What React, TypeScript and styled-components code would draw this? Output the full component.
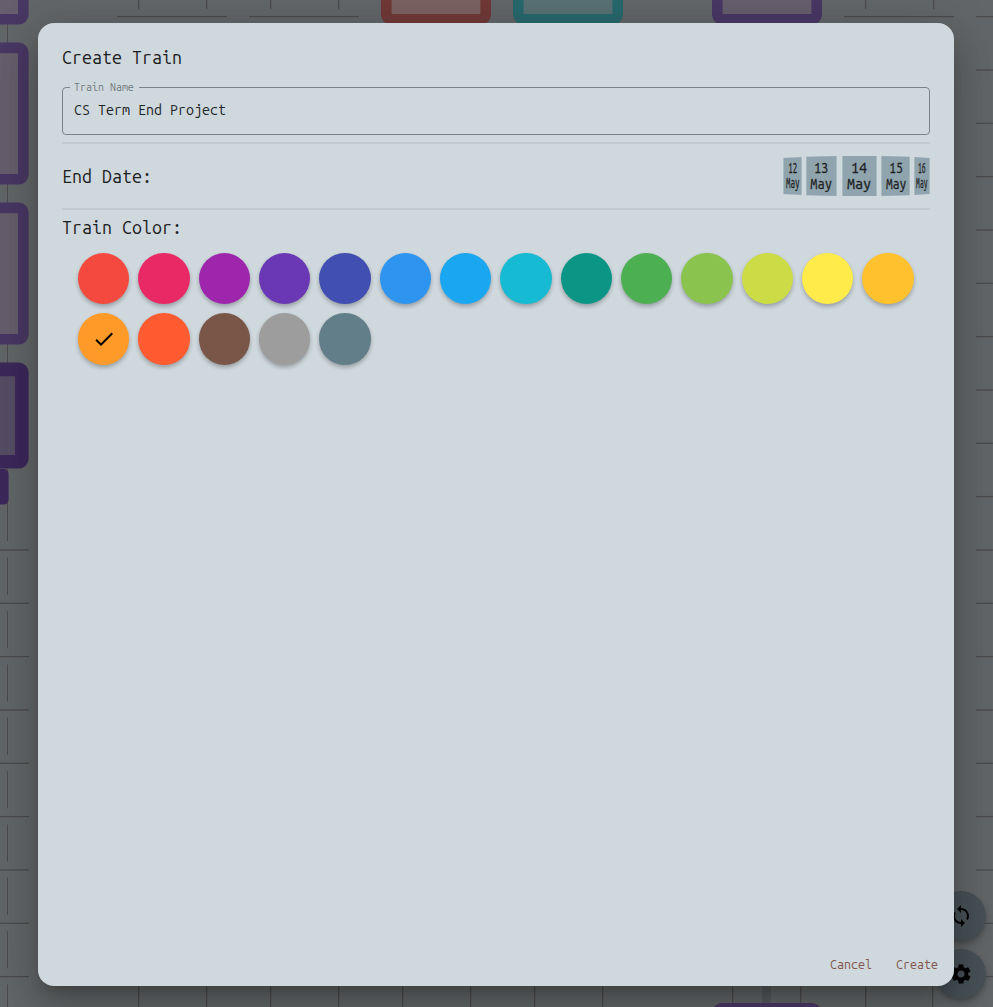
import React from "react";
import styled, { createGlobalStyle, css } from "styled-components";
import { MdCheck, MdSettings, MdSync } from "react-icons/md";

const GlobalStyle = createGlobalStyle`
  * { box-sizing: border-box; }
  html, body { margin: 0; padding: 0; }
  body { background: #626668; font-family: "Ubuntu Mono", "DejaVu Sans Mono", monospace; }
`;

const Page = styled.main`
  position: relative;
  width: 993px;
  height: 1007px;
  overflow: hidden;
  background: #626668;
  padding: 23px 39px 21px 38px;
  display: flex;
`;

const Backdrop = styled.div`
  position: absolute;
  inset: 0;
  display: flex;
  justify-content: flex-end;
  align-items: flex-end;
  padding: 0 7px 8px 0;
`;

const Board = styled.svg`
  position: absolute;
  inset: 0;
`;

const FabColumn = styled.div`
  position: relative;
  display: flex;
  flex-direction: column;
  gap: 8px;
`;

const Fab = styled.button`
  width: 50px;
  height: 50px;
  border: 0;
  border-radius: 50%;
  padding: 0;
  display: grid;
  place-items: center;
  background: #475156;
  color: #050505;
  font-size: 24px;
  box-shadow: 0 3px 5px -1px rgba(0, 0, 0, 0.2), 0 5px 8px rgba(0, 0, 0, 0.12);
`;

const Dialog = styled.section`
  position: relative;
  width: 916px;
  height: 963px;
  display: flex;
  flex-direction: column;
  background: #cfd8dd;
  border-radius: 16px;
  box-shadow: 0 11px 15px -7px rgba(0, 0, 0, 0.2), 0 24px 38px 3px rgba(0, 0, 0, 0.14),
    0 9px 46px 8px rgba(0, 0, 0, 0.12);
`;

const Content = styled.div`
  flex: 1;
  padding: 18px 24px 0;
  color: #1b2022;
`;

const heading = css`
  margin: 0;
  font-size: 17.85px;
  font-weight: 400;
  height: 32px;
  line-height: 32px;
`;
const Title = styled.h2`
  ${heading}
`;
const Label = styled.h3`
  ${heading}
`;

const PaletteLabel = styled(Label)`
  line-height: 34px;
`;

const Field = styled.fieldset`
  margin: 5px 0 7px;
  height: 57px;
  min-width: 0;
  padding: 0 11px;
  border: 1px solid #7b8485;
  border-radius: 4px;
  color: #202527;
`;

const Legend = styled.legend`
  margin-left: -4px;
  padding: 0 4px;
  height: 18px;
  width: 69px;
  font-size: 10.7px;
  line-height: 18px;
  color: #727b7e;
`;

const FieldValue = styled.div`
  height: 28px;
  font-size: 14.3px;
  line-height: 29px;
`;

const Rule = styled.hr`
  margin: 0;
  border: 0;
  height: 2px;
  background: #c2cbd1;
`;

const DateRow = styled.div`
  height: 64px;
  display: flex;
  align-items: center;
  justify-content: space-between;
`;

const Wheel = styled.div`
  display: flex;
  width: 147px;
  height: 40px;
  justify-content: space-between;
`;

const Day = styled.div<{ $w: number; $clip: string; $pad?: string }>`
  width: ${(p) => p.$w}px;
  height: 40px;
  padding: ${(p) => p.$pad ?? "0"};
  background: #90a4ad;
  clip-path: polygon(${(p) => p.$clip});
  border: 1px solid #a9bac1;
  border-width: 0 1px;
  display: flex;
  flex-direction: column;
  align-items: center;
  justify-content: center;
`;

const DayText = styled.span<{ $size: number; $scale: number; $line: number }>`
  font-size: ${(p) => p.$size}px;
  line-height: ${(p) => p.$line}px;
  transform: scaleX(${(p) => p.$scale});
  color: #1b2123;
  -webkit-text-stroke: 0.3px #1b2123;
  white-space: nowrap;
`;

const Palette = styled.div`
  display: grid;
  grid-template-columns: repeat(14, 51.3px);
  gap: 9px 9.05px;
  padding: 11px 16px 0;
`;

const Swatch = styled.button<{ $color: string }>`
  height: 51.3px;
  padding: 0;
  border: 0;
  border-radius: 50%;
  background: ${(p) => p.$color};
  color: #000;
  font-size: 24px;
  display: grid;
  place-items: center;
  box-shadow: 0 3px 5px -1px rgba(0, 0, 0, 0.2), 0 2px 4px rgba(0, 0, 0, 0.12);
`;

const Actions = styled.footer`
  display: flex;
  justify-content: flex-end;
  gap: 24px;
  height: 42px;
  padding-right: 16px;
`;

const Action = styled.button`
  height: 40px;
  padding: 0;
  border: 0;
  background: none;
  color: #80574e;
  font-family: inherit;
  font-size: 12.5px;
`;

const tieY = (i: number) => 16 + i * 53.33;

const leftTies = [10, 11, 12, 13, 14, 15, 16, 17, 18];
const rightTies = Array.from({ length: 19 }, (_, i) => i);
const bottomRails = [138, 206, 270, 338, 402, 470, 534, 602, 732, 800, 865, 932];

const wagons = [
  { x: -80, y: -100, w: 108.6, h: 124.6, edge: "#493764", fill: "#665e6c" },
  { x: -80, y: 42.6, w: 108.6, h: 142, edge: "#493764", fill: "#665e6c" },
  { x: -80, y: 202.6, w: 108.6, h: 142, edge: "#493764", fill: "#665e6c" },
  { x: -80, y: 362.6, w: 108.6, h: 106, edge: "#3d285b", fill: "#564d65", border: 13.6 },
  { x: 381, y: -100, w: 110, h: 124.6, edge: "#713938", fill: "#7b6162" },
  { x: 513, y: -100, w: 110, h: 124.6, edge: "#27686c", fill: "#587174" },
  { x: 712, y: -100, w: 110, h: 124.6, edge: "#493764", fill: "#665e6c" },
  { x: 712, y: 1003, w: 110, h: 100, edge: "#4c3968", fill: "#665e6c" },
];

const days = [
  { day: "12", w: 19, clip: "0 5%, 100% 2.5%, 100% 97.5%, 0 95%", size: 14, scale: 0.57, line: 15 },
  { day: "13", w: 31, clip: "0 2%, 100% 0, 100% 100%, 0 98%", size: 14.4, scale: 0.89, line: 16, pad: "0 2px 0 0" },
  { day: "14", w: 35, clip: "0 0, 100% 0, 100% 100%, 0 100%", size: 14.4, scale: 1, line: 16 },
  { day: "15", w: 29, clip: "0 0, 100% 2%, 100% 98%, 0 100%", size: 14.4, scale: 0.84, line: 16, pad: "0 0 0 2px" },
  { day: "16", w: 16, clip: "0 2.5%, 100% 5%, 100% 95%, 0 97.5%", size: 14, scale: 0.48, line: 15 },
];

const colors = [
  "#f4493f", "#e92866", "#9d26ad", "#6a38b4", "#424fb2", "#2d94ef", "#1aa7f2",
  "#16bbd3", "#0b9585", "#4caf52", "#8bc34f", "#ccdc46", "#ffeb4a", "#ffc22e",
  "#ff9a29", "#ff5b31", "#7a5649", "#9d9d9d", "#617e89",
];

function TrackBoard() {
  return (
    <Board width="993" height="1007" aria-hidden="true">
      <g fill="#4d4a4b">
        {leftTies.map((i) => (
          <React.Fragment key={i}>
            <rect x={0} y={tieY(i)} width={29} height={1.3} />
            <rect x={7} y={tieY(i) + 8.6} width={1} height={37} />
          </React.Fragment>
        ))}
        {rightTies.map((i) => <rect key={i} x={976} y={tieY(i)} width={17} height={1.3} />)}
        <rect x={7} y={20} width={1} height={521} />
        {[138, 206, 270, 338, 865, 933].map((x) => <rect key={x} x={x} y={0} width={1.3} height={9} />)}
        {[117, 249, 844].map((x) => <rect key={x} x={x} y={16} width={110} height={1.2} />)}
        {bottomRails.map((x) => <rect key={x} x={x} y={980} width={1.3} height={27} />)}
      </g>
      <rect x={762} y={980} width={9} height={24} fill="#56595d" />
      {wagons.map(({ x, y, w, h, edge, fill, border = 10.6 }) => (
        <g key={`${x}:${y}`}>
          <rect x={x} y={y} width={w} height={h} rx={10} fill={edge} />
          <rect x={x + border} y={y + border} width={w - 2 * border} height={h - 2 * border} fill={fill} />
        </g>
      ))}
      <rect x={-40} y={469} width={48.6} height={35.6} rx={5} fill="#3d285b" />
    </Board>
  );
}

export default function App() {
  return (
    <Page>
      <GlobalStyle />
      <Backdrop>
        <TrackBoard />
        <FabColumn>
          <Fab aria-label="Sync"><MdSync /></Fab>
          <Fab aria-label="Settings"><MdSettings /></Fab>
        </FabColumn>
      </Backdrop>
      <Dialog role="dialog">
        <Content>
          <Title>Create Train</Title>
          <Field>
            <Legend>Train Name</Legend>
            <FieldValue>CS Term End Project</FieldValue>
          </Field>
          <Rule />
          <DateRow>
            <Label>End Date:</Label>
            <Wheel>
              {days.map((d) => (
                <Day key={d.day} $w={d.w} $clip={d.clip} $pad={d.pad}>
                  <DayText $size={d.size} $scale={d.scale} $line={d.line}>{d.day}</DayText>
                  <DayText $size={d.size} $scale={d.scale} $line={d.line}>May</DayText>
                </Day>
              ))}
            </Wheel>
          </DateRow>
          <Rule />
          <PaletteLabel>Train Color:</PaletteLabel>
          <Palette>
            {colors.map((c, i) => (
              <Swatch key={c} $color={c} aria-label={c}>{i === 14 && <MdCheck />}</Swatch>
            ))}
          </Palette>
        </Content>
        <Actions>
          <Action>Cancel</Action>
          <Action>Create</Action>
        </Actions>
      </Dialog>
    </Page>
  );
}
